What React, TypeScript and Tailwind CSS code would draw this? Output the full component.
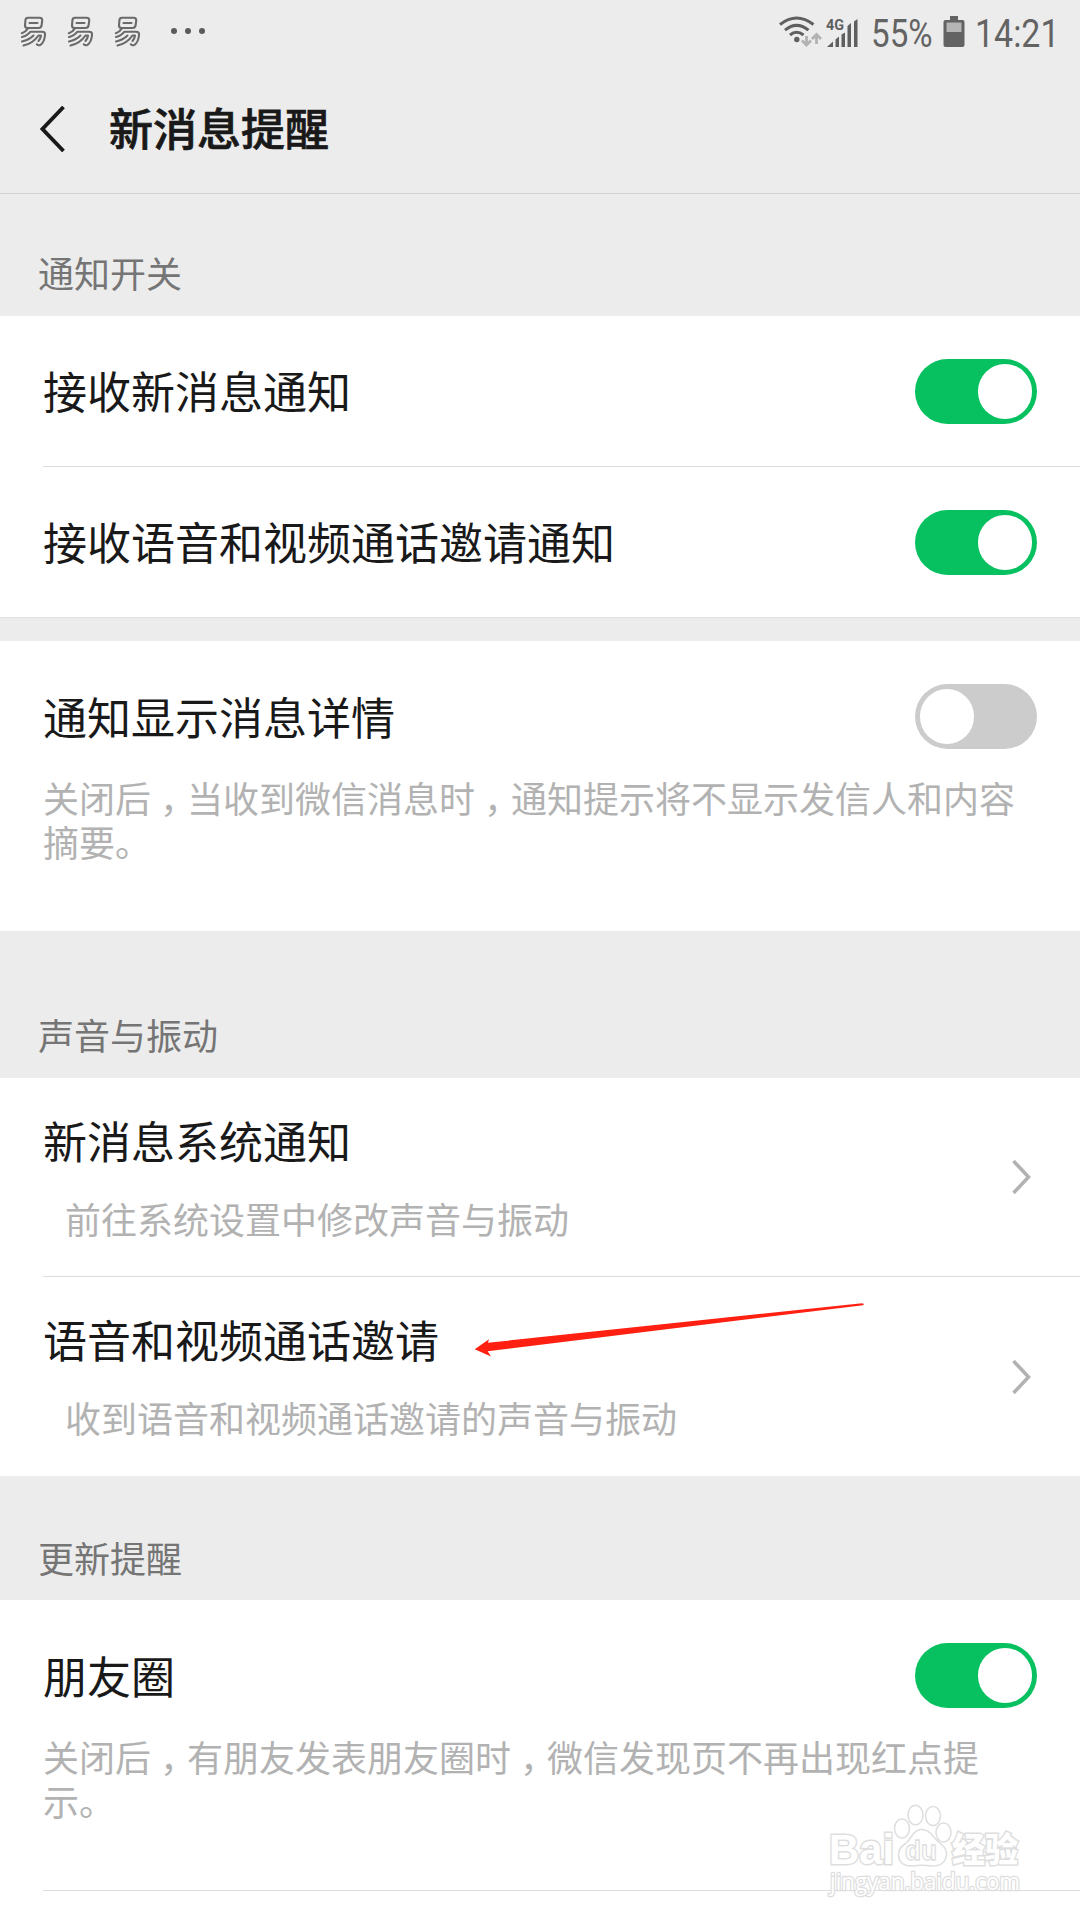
interface SwitchProps {
  on?: boolean;
}

function Switch({ on = false }: SwitchProps) {
  return (
    <div
      className={
        on
          ? 'flex h-[65px] w-[122px] shrink-0 items-center justify-end rounded-full bg-[#07c160] px-[5px]'
          : 'flex h-[65px] w-[122px] shrink-0 items-center justify-start rounded-full bg-[#cccccc] px-[5px]'
      }
    >
      <div className="h-[55px] w-[54px] rounded-full bg-white" />
    </div>
  );
}

function SectionTitle({ title, className }: { title: string; className: string }) {
  return (
    <div className={`flex flex-col justify-end bg-[#ececec] pl-[38px] ${className}`}>
      <h2 className="text-[36px] leading-[44px] text-[#757575]">{title}</h2>
    </div>
  );
}

function SwitchLabel({ text }: { text: string }) {
  return <p className="mb-[2px] text-[44px] leading-[60px] text-[#191919]">{text}</p>;
}

// The comma sits further right in its box than the font's own
function Comma() {
  return <span className="relative left-[9px]">，</span>;
}

function NeteaseIcon() {
  return (
    <svg width="28" height="32" viewBox="0 0 28 32" fill="none" stroke="#6a6a6a" strokeWidth="2.100" strokeLinecap="round" strokeLinejoin="round">
      <path d="M8 1.800h11.500q3 0 2.700 3l-.7 5q-.4 2.200-3 2.200H7.500Q5 12 5 9.500L5.400 4.300Q5.600 1.800 8 1.800Z" />
      <path d="M9.500 7h8" />
      <path d="M8 12.300Q5.500 16 1.800 17.200" />
      <path d="M2 21Q7 20 10.500 15.700H22Q25.500 15.700 25 19Q24.500 26 20.500 28.800Q18.500 30 16.800 28.300" />
      <path d="M2 25.500Q9 24 13.500 19.500" />
      <path d="M3.500 29.500Q13 27.500 18.500 19.500H21Q20.500 23 18.500 25" />
    </svg>
  );
}

function StatusBar() {
  return (
    <div className="flex h-[64px] items-start justify-between pl-[20px] pr-[21px] pt-[16px]">
      <div className="flex items-start">
        <div className="flex gap-[19px]">
          <NeteaseIcon />
          <NeteaseIcon />
          <NeteaseIcon />
        </div>
        <div className="ml-[29px] mt-[12px] flex gap-[8px]">
          <div className="h-[6px] w-[6px] rounded-full bg-[#5a5a5a]" />
          <div className="h-[6px] w-[6px] rounded-full bg-[#5a5a5a]" />
          <div className="h-[6px] w-[6px] rounded-full bg-[#5a5a5a]" />
        </div>
      </div>

      <div className="flex items-start">
        {/* Wifi with transfer arrows */}
        <svg width="44" height="32" viewBox="0 0 44 32" fill="none">
          <g stroke="#5f5f5f" strokeWidth="3">
            <path d="M1 8.500Q17.500-4.500 34.500 8.500" />
            <path d="M6 14.200Q17.500 4.500 29.500 14.200" />
            <path d="M11 19Q17.500 13.500 24.500 19" />
          </g>
          <circle cx="17.800" cy="23.500" r="2.700" fill="#5f5f5f" />
          <g stroke="#b2b2b2" strokeWidth="2.800">
            <path d="M27.500 20v8M23 24.500l4.500 4.500l4.500-4.500" />
            <path d="M37.500 28V19M33 23l4.500-4.500L42 23" />
          </g>
        </svg>

        {/* 4G signal */}
        <svg className="ml-[3px]" width="33" height="32" viewBox="0 0 33 32" fill="#5f5f5f">
          <text x="0" y="14" fontFamily="Roboto" fontSize="14" fontWeight="700" textLength="18" lengthAdjust="spacingAndGlyphs">4G</text>
          <path d="M1 31L7 25.500V31Z" />
          <path d="M9.500 23.500L13 20.500V31H9.500Z" />
          <path d="M15.500 18.500L19 16.500V31H15.500Z" />
          <path d="M21.500 10L25 7V31H21.500Z" />
          <path d="M28 5.500L31.500 3V31H28Z" />
        </svg>

        <div className="ml-[12px] w-[60px] font-[Roboto] text-[39px] leading-[36px] text-[#636363]">
          <div className="w-max origin-left scale-x-[0.85]">55%</div>
        </div>

        {/* Battery */}
        <svg className="ml-[12px]" width="22" height="32" viewBox="0 0 22 32">
          <path d="M7 0h8v4h4.500q2 0 2 2v23q0 2-2 2H2.500q-2 0-2-2V6q0-2 2-2H7Z" fill="#636363" />
          <path d="M3.500 6.500h15V16h-15Z" fill="#b5b5b5" />
        </svg>

        <div className="ml-[10px] w-[84px] font-[Roboto] text-[39px] leading-[36px] text-[#636363]">
          <div className="w-max origin-left scale-x-[0.87]">14:21</div>
        </div>
      </div>
    </div>
  );
}

function Chevron() {
  return (
    <svg className="shrink-0" width="20" height="34" viewBox="0 0 20 34" fill="none" stroke="#b2b2b2" strokeWidth="3.600">
      <path d="M1.500 1L16.500 17L1.500 33" />
    </svg>
  );
}

function LinkRow({ title, desc, last }: { title: string; desc: string; last?: boolean }) {
  return (
    <div className="pl-[43px]">
      <div className={`flex h-[199px] items-center justify-between pr-[48px] ${last ? '' : 'border-b border-[#dcdcdc]'}`}>
        <div className="h-full pt-[32px]">
          <p className="text-[44px] leading-[60px] text-[#191919]">{title}</p>
          <p className="mt-[22px] pl-[22px] text-[36px] leading-[52px] text-[#b2b2b2]">{desc}</p>
        </div>
        <Chevron />
      </div>
    </div>
  );
}

function Arrow() {
  return (
    <svg className="absolute left-[474px] top-[1302px]" width="392" height="56" viewBox="0 0 392 56">
      <path d="M.7 47.300L15 37.300L14 40.700L388 1.200L390 2L389 3.200L13.700 49.300L17 54.500Z" fill="#ff2012" />
    </svg>
  );
}

function Watermark() {
  return (
    <svg className="absolute left-[824px] top-[1800px]" width="204" height="100" viewBox="0 0 204 100" fill="#ffffff" stroke="#dedede" strokeWidth="1.500">
      <g fontFamily="Liberation Sans" fontWeight="700" strokeWidth="3" paintOrder="stroke">
        <text x="5" y="64" fontSize="43" textLength="65" lengthAdjust="spacingAndGlyphs">Bai</text>
        <text x="128" y="62" fontFamily="Noto Sans CJK SC" fontSize="34" fontWeight="900" textLength="66" lengthAdjust="spacingAndGlyphs">经验</text>
      </g>
      <ellipse cx="78" cy="28.500" rx="7.500" ry="9.500" />
      <ellipse cx="91.500" cy="15" rx="7.500" ry="9.800" />
      <ellipse cx="109" cy="16" rx="7.500" ry="9.500" />
      <ellipse cx="119.500" cy="32.500" rx="7.500" ry="9.500" />
      <path d="M98 29.500Q104 29.500 109 36Q113 41 118 45Q123 49 122.500 55Q121 66 108 66Q98 64.500 88 66Q75 66 74.500 55Q74.500 48 81 44Q85 41 88.500 35Q92 29.500 98 29.500Z" />
      <text x="81" y="60" fontFamily="Liberation Sans" fontSize="28" fontWeight="700" strokeWidth="1.300" textLength="32" lengthAdjust="spacingAndGlyphs">du</text>
      <text x="6" y="90" fontFamily="Open Sans" fontSize="23" strokeWidth="2.600" paintOrder="stroke" textLength="190" lengthAdjust="spacingAndGlyphs">jingyan.baidu.com</text>
    </svg>
  );
}

export default function App() {
  return (
    <div lang="zh-CN" className="relative h-[1920px] w-[1080px] overflow-hidden bg-white font-['Noto_Sans_CJK_SC',sans-serif]">
      <header className="h-[194px] border-b border-[#d5d5d5] bg-[#ececec]">
        <StatusBar />
        <div className="flex h-[129px] items-center pl-[40px]">
          <svg width="26" height="46" viewBox="0 0 26 46" fill="none" stroke="#191919" strokeWidth="3.800">
            <path d="M23.500 1L2.500 23L23.500 45" />
          </svg>
          <h1 className="mb-[3px] ml-[43px] text-[44px] font-medium leading-[60px] text-[#191919] [-webkit-text-stroke:0.7px_#191919]">新消息提醒</h1>
        </div>
      </header>

      <SectionTitle title="通知开关" className="h-[122px] pb-[22px]" />
      <div className="pl-[43px]">
        <div className="flex h-[151px] items-center justify-between border-b border-[#dcdcdc] pr-[43px]">
          <SwitchLabel text="接收新消息通知" />
          <Switch on />
        </div>
        <div className="flex h-[150px] items-center justify-between pr-[43px]">
          <SwitchLabel text="接收语音和视频通话邀请通知" />
          <Switch on />
        </div>
      </div>

      <div className="h-[24px] border-t border-[#e0e0e0] bg-[#ececec]" />

      <div className="h-[290px] px-[43px] pt-[43px]">
        <div className="flex items-center justify-between">
          <SwitchLabel text="通知显示消息详情" />
          <Switch />
        </div>
        <p className="mt-[26px] text-[36px] leading-[44px] text-[#b2b2b2]">
          关闭后<Comma />当收到微信消息时<Comma />通知提示将不显示发信人和内容摘要。
        </p>
      </div>

      <SectionTitle title="声音与振动" className="h-[147px] pb-[22px]" />
      <LinkRow title="新消息系统通知" desc="前往系统设置中修改声音与振动" />
      <LinkRow title="语音和视频通话邀请" desc="收到语音和视频通话邀请的声音与振动" last />

      <SectionTitle title="更新提醒" className="h-[124px] pb-[21px]" />
      <div className="pl-[43px]">
        <div className="h-[291px] border-b border-[#dcdcdc] pr-[43px] pt-[43px]">
          <div className="flex items-center justify-between">
            <SwitchLabel text="朋友圈" />
            <Switch on />
          </div>
          <p className="mt-[26px] text-[36px] leading-[44px] text-[#b2b2b2]">
            关闭后<Comma />有朋友发表朋友圈时<Comma />微信发现页不再出现红点提示。
          </p>
        </div>
      </div>

      <Arrow />
      <Watermark />
    </div>
  );
}
